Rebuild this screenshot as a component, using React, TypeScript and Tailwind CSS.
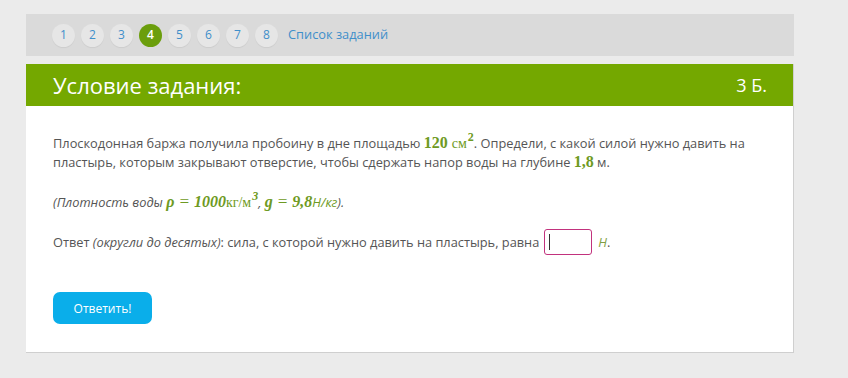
import React from 'react';

const pages = [1, 2, 3, 4, 5, 6, 7, 8];

const M = ({ children }: { children: React.ReactNode }) => (
  <span className="text-[#6e9a23] font-bold text-[16px] leading-none [font-family:'Liberation_Serif',serif]">{children}</span>
);

const Eq = () => <span className="mx-[4px] font-normal text-[17px]">=</span>;

const Sup = ({ children }: { children: React.ReactNode }) => (
  <span className="relative -top-[7px] ml-[1px] text-[12px] leading-none">{children}</span>
);

const App = () => {
  return (
    <div className="w-[848px] h-[378px] bg-[#ebebeb] pt-[14px] pl-[26px] [font-family:'Open_Sans',sans-serif]">
      <div className="w-[768px]">
        <nav className="h-[42px] bg-[#dadada] flex items-center pl-[26px] gap-[6px]">
          {pages.map((p) =>
            p === 4 ? (
              <span
                key={p}
                className="w-[23px] h-[23px] rounded-full bg-[#6b9e0c] text-white text-[12px] font-semibold flex items-center justify-center"
              >
                {p}
              </span>
            ) : (
              <span
                key={p}
                className="w-[23px] h-[23px] rounded-full bg-[#e6e6e6] text-[#3f8fca] text-[12px] flex items-center justify-center shadow-[0_1px_1px_rgba(0,0,0,0.06)]"
              >
                {p}
              </span>
            )
          )}
          <a className="ml-[4px] text-[12.8px] text-[#3f8fca]">Список заданий</a>
        </nav>

        <section className="mt-[8px] bg-white border-r border-b border-[#cfcfcf]">
          <header className="h-[42px] bg-[#74a800] flex items-center justify-between pl-[27px] pr-[26px] text-white">
            <h1 className="text-[22px] leading-none">Условие задания:</h1>
            <span className="text-[18px] leading-none">3 Б.</span>
          </header>

          <div className="pl-[27px] pr-[30px] pt-[28px] pb-[28px] text-[12.8px] text-[#555] leading-[19px]">
            <p>
              Плоскодонная баржа получила пробоину в дне площадью{' '}
              <M>
                120 <span className="font-normal text-[14px]">см</span>
                <Sup>2</Sup>
              </M>
              . Определи, с какой силой нужно давить на пластырь, которым закрывают отверстие, чтобы сдержать
              напор воды на глубине <M>1,8</M> м.
            </p>

            <p className="mt-[21px] italic">
              (Плотность воды{' '}
              <M>
                <i>ρ</i>
                <Eq />
                1000<span className="font-normal not-italic text-[14px]">кг/м</span>
                <Sup>3</Sup>
              </M>
              ,{' '}
              <M>
                <i>g</i>
                <Eq />
                9,8
              </M>
              <span className="text-[#6e9a23]">Н/кг</span>).
            </p>

            <div className="mt-[17px] flex items-center">
              <span>
                Ответ <i>(округли до десятых)</i>: сила, с которой нужно давить на пластырь, равна
              </span>
              <span className="ml-[5px] w-[48px] h-[26px] border border-[#c2327d] rounded-[3px] flex items-center pl-[4px]">
                <span className="w-px h-[16px] bg-[#333]" />
              </span>
              <span className="ml-[6px] italic text-[#7f9f45]">Н</span>
              <span>.</span>
            </div>

            <button className="mt-[37px] w-[99px] h-[32px] rounded-[7px] bg-[#0aaeea] text-white text-[12px]">
              Ответить!
            </button>
          </div>
        </section>
      </div>
    </div>
  );
};

export default App;
